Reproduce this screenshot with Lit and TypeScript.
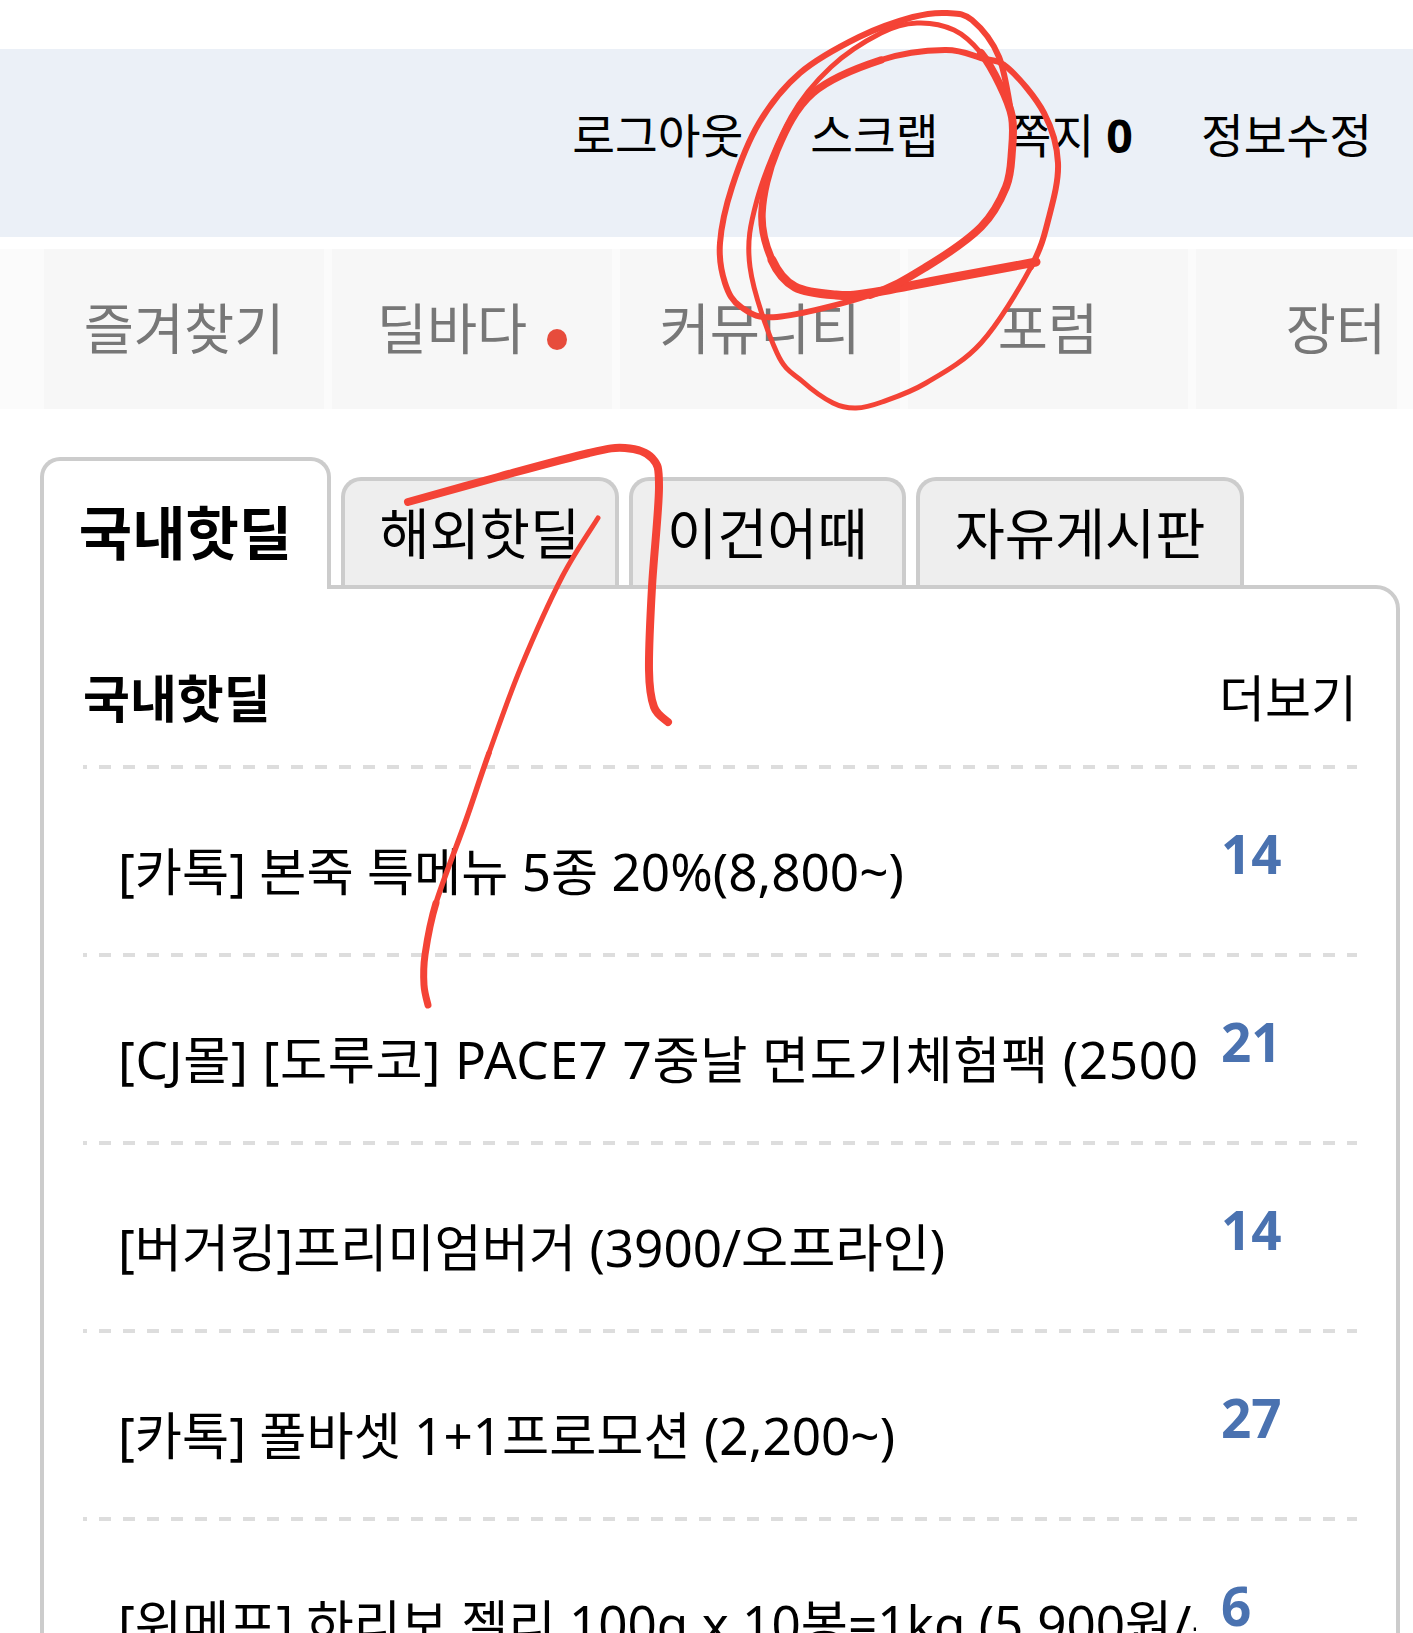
import { LitElement, html, css, svg } from "lit";
import { customElement } from "lit/decorators.js";

const NAV = [
  { label: "즐겨찾기", dot: false },
  { label: "딜바다", dot: true },
  { label: "커뮤니티", dot: false },
  { label: "포럼", dot: false },
  { label: "장터", dot: false },
];
const TABS = ["국내핫딜", "해외핫딜", "이건어때", "자유게시판"];
const ROWS = [
  { t: "[카톡] 본죽 특메뉴 5종 20%(8,800~)", c: 14, wide: false },
  { t: "[CJ몰] [도루코] PACE7 7중날 면도기체험팩 (2500원/무료)", c: 21, wide: true },
  { t: "[버거킹]프리미엄버거 (3900/오프라인)", c: 14, wide: false },
  { t: "[카톡] 폴바셋 1+1프로모션 (2,200~)", c: 27, wide: false },
  { t: "[위메프] 하리보 젤리 100g x 10봉=1kg (5,900원/무료)", c: 6, wide: false },
];

type Pt = [number, number];
/* Catmull-Rom through the whole stroke; a width range draws only its part, so joins stay smooth. */
const part = (p: Pt[], from: number, to: number) => {
  let d = `M${p[from][0]} ${p[from][1]}`;
  for (let i = from; i < to; i++) {
    const a = p[Math.max(i - 1, 0)], b = p[i], c = p[i + 1], e = p[Math.min(i + 2, p.length - 1)];
    d += ` C${(b[0] + (c[0] - a[0]) / 6).toFixed(1)} ${(b[1] + (c[1] - a[1]) / 6).toFixed(1)} ${(c[0] - (e[0] - b[0]) / 6).toFixed(1)} ${(c[1] - (e[1] - b[1]) / 6).toFixed(1)} ${c[0]} ${c[1]}`;
  }
  return d;
};
const CIRCLE: Pt[] = [
  [1036, 262], [950, 278], [870, 293], [836, 295], [795, 287], [772, 260], [762, 213], [777, 150], [813, 93],
  [881, 60], [945, 50], [981, 58], [1008, 68], [1044, 113], [1058, 163], [1049, 217], [1031, 267],
  [981, 343], [926, 383], [882, 402], [856, 408], [833, 403], [802, 381], [777, 353], [750, 267], [757, 200], [791, 117], [831, 67], [881, 33], [917, 23], [954, 30], [981, 53],
  [1000, 85], [1012, 117], [1012, 150], [1006, 187], [981, 227], [926, 267], [870, 295],
  [777, 317], [741, 307], [725, 283], [720, 243], [732, 187], [759, 123], [800, 73], [859, 37], [913, 17], [947, 13], [972, 20], [999, 57], [1012, 117],
];
const HOOK: Pt[] = [[408, 502], [498, 477], [589, 453], [625, 448], [652, 458], [659, 487], [652, 587], [649, 670], [654, 707], [668, 722]];
const LINE: Pt[] = [[598, 518], [562, 577], [521, 667], [489, 753], [466, 820], [436, 903], [425, 955], [424, 985], [428, 1005]];
const INK: { p: Pt[]; from: number; to: number; w: number }[] = [
  { p: CIRCLE, from: 0, to: 5, w: 9 },
  { p: CIRCLE, from: 5, to: 9, w: 7.5 },
  { p: CIRCLE, from: 9, to: 16, w: 6 },
  { p: CIRCLE, from: 16, to: 31, w: 5 },
  { p: CIRCLE, from: 31, to: 38, w: 8 },
  { p: CIRCLE, from: 38, to: 51, w: 6 },
  { p: HOOK, from: 0, to: 9, w: 8 },
  { p: LINE, from: 0, to: 3, w: 5 },
  { p: LINE, from: 3, to: 5, w: 5.5 },
  { p: LINE, from: 5, to: 8, w: 7 },
];

@customElement("app-root")
export class AppRoot extends LitElement {
  static styles = css`
    :host {
      display: block;
      position: relative;
      height: 1633px;
      overflow: hidden;
      background: #fff;
      font-family: "Noto Sans", "Noto Sans CJK KR", sans-serif;
      color: #000;
    }
    .top {
      margin-top: 49px;
      height: 188px;
      background: #ebf0f7;
      display: flex;
      justify-content: flex-end;
      align-items: center;
      gap: 67px;
      padding: 0 41px 15px 0;
      font-size: 46.5px;
      line-height: 1;
      box-sizing: border-box;
    }
    .top b { font-weight: 700; }
    .top .msg { margin: 0 1px 0 3px; }
    .nav {
      margin-top: 12px;
      height: 160px;
      background: #fbfbfb;
      padding: 0 16px 0 44px;
      box-sizing: border-box;
    }
    .nav-in { display: flex; gap: 8px; height: 100%; overflow: hidden; }
    .nav-item {
      flex: 0 0 280px;
      background: #f7f7f7;
      color: #777;
      font-size: 54.5px;
      display: flex;
      align-items: center;
      justify-content: center;
      gap: 20px;
      line-height: 1;
      padding-bottom: 2px;
      box-sizing: border-box;
    }
    .dot { width: 20px; height: 21px; border-radius: 50%; background: #e74c3c; margin-top: 22px; }
    .tabs {
      display: flex;
      align-items: flex-end;
      gap: 10px;
      margin: 48px 0 -4px 40px;
      position: relative;
      z-index: 1;
    }
    .tab {
      height: 108px;
      margin-bottom: 4px;
      box-sizing: border-box;
      padding: 0 34.5px;
      border: 4px solid #ccc;
      border-bottom: 0;
      border-radius: 20px 20px 0 0;
      background: #eee;
      font-size: 54.5px;
      line-height: 1;
      display: flex;
      align-items: center;
      justify-content: center;
    }
    .tab.on { height: 132px; margin-bottom: 0; width: 291px; background: #fff; font-weight: 700; font-size: 58px; padding: 15px 0 0; }
    .panel {
      margin: 0 13px 0 40px;
      border: 4px solid #ccc;
      border-radius: 0 24px 0 0;
      padding: 0 39px;
      height: 1200px;
      background: #fff;
    }
    .head, .row {
      background: linear-gradient(to right, #ddd 12px, transparent 12px) 16px 100% / 24px 4px repeat-x;
      box-sizing: border-box;
    }
    .head {
      height: 180px;
      padding-top: 38px;
      display: flex;
      justify-content: space-between;
      align-items: center;
      font-size: 50px;
      line-height: 1;
    }
    .head strong { font-size: 51px; font-weight: 700; }
    .row {
      height: 188px;
      display: flex;
      padding-left: 35px;
    }
    .row .t {
      flex: 0 0 1078px;
      white-space: nowrap;
      overflow: hidden;
      font-size: 51.25px;
      line-height: 64px;
      padding-top: 70px;
      box-sizing: border-box;
    }
    .row .t.wide { letter-spacing: 0.65px; }
    .row .c {
      margin-left: 25px;
      color: #4a72b0;
      font-weight: 700;
      font-size: 53px;
      line-height: 64px;
      padding-top: 53px;
    }
    .ink { position: absolute; left: 0; top: 0; z-index: 5; pointer-events: none; }
    .ink path { fill: none; stroke: #f44336; stroke-linecap: round; stroke-linejoin: round; }
  `;

  render() {
    return html`
      <div class="top">
        <span>로그아웃</span><span>스크랩</span><span class="msg">쪽지 <b>0</b></span><span>정보수정</span>
      </div>
      <div class="nav"><div class="nav-in">
        ${NAV.map((n) => html`<div class="nav-item"><span>${n.label}</span>${n.dot ? html`<i class="dot"></i>` : ""}</div>`)}
      </div></div>
      <div class="tabs">
        ${TABS.map((t, i) => html`<div class="tab ${i === 0 ? "on" : ""}">${t}</div>`)}
      </div>
      <div class="panel">
        <div class="head"><strong>국내핫딜</strong><span>더보기</span></div>
        ${ROWS.map((r) => html`<div class="row"><div class="t ${r.wide ? "wide" : ""}">${r.t}</div><div class="c">${r.c}</div></div>`)}
      </div>
      <svg class="ink" width="1413" height="1633" viewBox="0 0 1413 1633">
        ${INK.map((s) => svg`<path stroke-width=${s.w} d=${part(s.p, s.from, s.to)}></path>`)}
      </svg>
    `;
  }
}
